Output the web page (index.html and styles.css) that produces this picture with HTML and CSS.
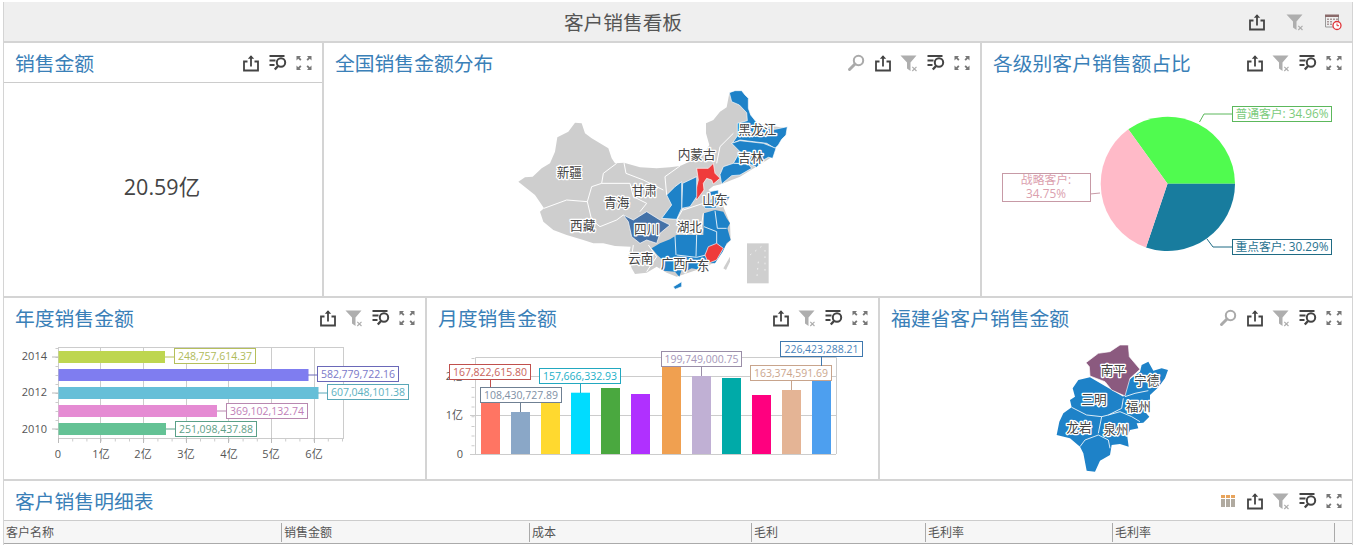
FILE: index.html
```html
<!DOCTYPE html>
<html lang="zh-CN">
<head>
<meta charset="utf-8">
<title>客户销售看板</title>
<link rel="stylesheet" href="styles.css">
</head>
<body>
<svg class="defs" width="0" height="0" aria-hidden="true">
  <symbol id="i-share" viewBox="0 0 18 18">
    <path d="M5.500 7.500H2V16.500H16V7.500H12.500" fill="none" stroke="#444" stroke-width="1.800"/>
    <path d="M9 12.500V2" fill="none" stroke="#444" stroke-width="1.800"/>
    <path d="M5.800 4.800L9 1.300L12.200 4.800Z" fill="#444"/>
  </symbol>
  <symbol id="i-filter" viewBox="0 0 18 18">
    <path d="M0.500 1.500H16.500L10.500 8.500V17L7 14.500V8.500Z" fill="#aeaeae"/>
    <path d="M12.300 12.800L16.500 17M16.500 12.800L12.300 17" stroke="#aeaeae" stroke-width="1.200"/>
  </symbol>
  <symbol id="i-list" viewBox="0 0 18 18">
    <path d="M0.500 2H15.500M0.500 6.500H6.500M0.500 11H5.500" stroke="#444" stroke-width="1.800" fill="none"/>
    <circle cx="12" cy="8.500" r="4.200" fill="none" stroke="#444" stroke-width="2"/>
    <path d="M9 12L5.800 15.500" stroke="#444" stroke-width="2.400"/>
  </symbol>
  <symbol id="i-full" viewBox="0 0 18 18">
    <path d="M1.500 2H6L4.600 3.400L6.500 5.500L5.200 6.800L3.200 4.800L1.500 6.500Z" fill="#777"/>
    <path d="M16.500 2H12L13.400 3.400L11.500 5.500L12.800 6.800L14.800 4.800L16.500 6.500Z" fill="#777"/>
    <path d="M1.500 16H6L4.600 14.600L6.500 12.500L5.200 11.200L3.200 13.200L1.500 11.500Z" fill="#777"/>
    <path d="M16.500 16H12L13.400 14.600L11.500 12.500L12.800 11.200L14.800 13.200L16.500 11.500Z" fill="#777"/>
  </symbol>
  <symbol id="i-zoom" viewBox="0 0 18 18">
    <circle cx="11.500" cy="6.500" r="4.700" fill="none" stroke="#aaa" stroke-width="2"/>
    <path d="M8 10L2.500 15.500" stroke="#aaa" stroke-width="3" stroke-linecap="round"/>
  </symbol>
  <symbol id="i-cal" viewBox="0 0 18 18">
    <path d="M1 1.500H15V4H1Z" fill="#8a6a6a"/>
    <path d="M1.500 4V14H9M14.500 4V8" fill="none" stroke="#999" stroke-width="1"/>
    <path d="M3 5.500H5V7H3ZM6 5.500H8V7H6ZM9 5.500H11V7H9ZM12 5.500H14V7H12ZM3 8H5V9.500H3ZM6 8H8V9.500H6ZM3 10.500H5V12H3ZM6 10.500H8V12H6Z" fill="#a99"/>
    <circle cx="13" cy="12.500" r="4" fill="#fff" stroke="#e0353a" stroke-width="1.300"/>
    <path d="M13 10.500V12.700H15" fill="none" stroke="#e0353a" stroke-width="1"/>
  </symbol>
  <symbol id="i-cols" viewBox="0 0 18 18">
    <path d="M2 3H6V6H2ZM7 3H11V6H7ZM12 3H16V6H12Z" fill="#e8a45c"/>
    <path d="M2 7H6V15H2ZM7 7H11V15H7ZM12 7H16V15H12Z" fill="#b0aaa0"/>
  </symbol>
</svg>

<div class="board">
  <header class="topbar">
    <h1 class="board-title">客户销售看板</h1>
    <div class="tools tools-wide">
      <svg class="icon"><use href="#i-share"/></svg>
      <svg class="icon"><use href="#i-filter"/></svg>
      <svg class="icon"><use href="#i-cal"/></svg>
    </div>
  </header>

  <div class="row row-one">
    <section class="panel p-kpi">
      <div class="panel-head">
        <h2 class="panel-title">销售金额</h2>
        <div class="tools">
          <svg class="icon"><use href="#i-share"/></svg>
          <svg class="icon"><use href="#i-list"/></svg>
          <svg class="icon"><use href="#i-full"/></svg>
        </div>
      </div>
      <div class="kpi-body"><span class="kpi-value">20.59亿</span></div>
    </section>

    <section class="panel p-china">
      <div class="panel-head">
        <h2 class="panel-title">全国销售金额分布</h2>
        <div class="tools">
          <svg class="icon"><use href="#i-zoom"/></svg>
          <svg class="icon"><use href="#i-share"/></svg>
          <svg class="icon"><use href="#i-filter"/></svg>
          <svg class="icon"><use href="#i-list"/></svg>
          <svg class="icon"><use href="#i-full"/></svg>
        </div>
      </div>
      <svg class="chart" width="656" height="214" viewBox="324 82 656 214">
        <g transform="translate(500 80) scale(0.33333)">
          <path class="land" d="M55 305L75 292L98 290L125 265L150 250L165 215L172 172L205 155L225 128L245 130L255 160L275 175L300 190L325 205L335 235L345 250L372 248L420 262L470 265L510 262L540 258L585 238L610 225L628 195L618 160L618 130L640 120L660 95L680 82L688 40L715 50L720 75L745 100L745 125L770 130L860 145L810 235L720 290L665 312L640 318L625 330L650 345L690 350L670 380L690 430L692 480L660 515L640 550L590 570L530 590L500 578L470 560L440 578L405 582L395 565L385 530L392 500L345 498L310 490L280 490L250 480L200 465L160 450L130 425L120 395L132 385L105 345Z"/>
          <path class="border" d="M132 385L200 360L262 365L275 320L305 310L310 280L350 250M262 365L275 420L300 440L350 420L370 405M372 248L378 280L430 300L490 330M305 310L390 310L400 350L440 370L420 395M540 258L495 290L500 345M700 160L660 200L650 250M400 495L395 530M445 495L470 530L440 575M550 390L610 370M550 385L530 420L560 465M610 400L600 465"/>
          <path class="blue" d="M688 38L705 32L725 32L735 45L745 55L745 85L752 105L768 125L795 145L825 148L862 140L858 165L845 178L835 195L825 205L800 190L760 185L720 180L697 190L712 168L712 130L742 122L740 98L718 75L695 65Z"/>
          <path class="blue" d="M695 190L720 182L790 190L828 205L818 235L805 232L790 240L770 262L745 250L700 250L720 215Z"/>
          <path class="blue" d="M660 284L670 260L700 250L745 252L755 265L720 285L695 287L665 312Z"/>
          <path class="red" d="M590 265L625 265L640 250L645 280L660 295L640 312L635 300L620 295L610 310L612 330L590 360L585 340L595 300Z"/>
          <path class="blue" d="M548 310L590 290L590 350L570 380L545 385Z"/>
          <path class="blue" d="M525 320L545 305L545 385L530 418L485 415L515 375L500 345Z"/>
          <path class="blue" d="M628 335L655 330L655 345L632 348Z"/>
          <path class="blue" d="M610 372L640 352L690 350L680 365L645 385L615 385Z"/>
          <path class="blue no-stroke" d="M455 505L480 490L510 478L530 465L610 465L612 400L645 390L670 395L680 415L690 430L682 445L692 480L680 490L668 515L645 550L620 548L605 560L590 568L575 565L560 572L545 570L538 590L525 575L490 572L488 540L472 525Z"/>
          <path class="thin" d="M525 468L528 525M590 465L588 530M530 525L590 532L618 525M645 392L652 445L680 445M612 440L650 455L650 490"/>
          <path class="steel" d="M370 405L400 420L440 395L480 420L510 435L480 460L470 490L440 480L420 490L395 470L385 425Z"/>
          <path class="red" d="M625 500L650 490L670 505L650 540L625 550L615 525Z"/>
          <path class="blue" d="M520 620L545 605L545 620L525 628Z"/>
          <path class="land" d="M670 565L690 530L690 545L678 570Z"/>
          <path class="inset" d="M741 490H806V610H741Z"/>
          <path class="inset-line" d="M750 525L770 510L790 495M795 510V580M775 545L770 600"/>
          <text class="map-label" x="772" y="163">黑龙江</text>
          <text class="map-label" x="752" y="245">吉林</text>
          <text class="map-label" x="590" y="236">内蒙古</text>
          <text class="map-label" x="208" y="290">新疆</text>
          <text class="map-label" x="433" y="345">甘肃</text>
          <text class="map-label" x="350" y="380">青海</text>
          <text class="map-label" x="645" y="371">山东</text>
          <text class="map-label" x="248" y="450">西藏</text>
          <text class="map-label" x="440" y="461">四川</text>
          <text class="map-label" x="568" y="453">湖北</text>
          <text class="map-label" x="422" y="550">云南</text>
          <text class="map-label" x="520" y="563">广西</text>
          <text class="map-label" x="590" y="570">广东</text>
        </g>
      </svg>
    </section>

    <section class="panel p-pie">
      <div class="panel-head">
        <h2 class="panel-title">各级别客户销售额占比</h2>
        <div class="tools">
          <svg class="icon"><use href="#i-share"/></svg>
          <svg class="icon"><use href="#i-filter"/></svg>
          <svg class="icon"><use href="#i-list"/></svg>
          <svg class="icon"><use href="#i-full"/></svg>
        </div>
      </div>
      <svg class="chart" width="370" height="214" viewBox="982 82 370 214">
        <path d="M1167.500 183.700L1128.300 129.300A67.500 67.500 0 0 1 1235 183.700Z" fill="#50fb4f"/>
        <path d="M1167.500 183.700L1235 183.700A67.500 67.500 0 0 1 1146 247.500Z" fill="#187c9e"/>
        <path d="M1167.500 183.700L1146 247.500A67.500 67.500 0 0 1 1128.300 129.300Z" fill="#ffbac8"/>
        <path class="lead" stroke="#5cb85c" d="M1199.500 122L1204 114H1232"/>
        <path class="lead" stroke="#c79aa6" d="M1090 194L1100 193"/>
        <path class="lead" stroke="#1f6b84" d="M1207 239L1213 247H1232"/>
        <rect class="lbl-box" x="1232.500" y="106.500" width="99" height="15" stroke="#5cb85c"/>
        <text class="lbl-text" x="1282" y="118" fill="#7ccb7c">普通客户: 34.96%</text>
        <rect class="lbl-box" x="1002.500" y="173.500" width="88" height="28" stroke="#c79aa6"/>
        <text class="lbl-text" x="1046" y="184" fill="#dba0ae">战略客户:</text>
        <text class="lbl-text" x="1046" y="198" fill="#dba0ae">34.75%</text>
        <rect class="lbl-box" x="1232.500" y="239.500" width="99" height="15" stroke="#1f6b84"/>
        <text class="lbl-text" x="1282" y="251" fill="#2a7391">重点客户: 30.29%</text>
      </svg>
    </section>
  </div>

  <div class="row row-two">
    <section class="panel p-year">
      <div class="panel-head">
        <h2 class="panel-title">年度销售金额</h2>
        <div class="tools">
          <svg class="icon"><use href="#i-share"/></svg>
          <svg class="icon"><use href="#i-filter"/></svg>
          <svg class="icon"><use href="#i-list"/></svg>
          <svg class="icon"><use href="#i-full"/></svg>
        </div>
      </div>
      <svg class="chart" width="421" height="141" viewBox="4 337 421 141">
        <rect class="plot" x="58.500" y="347.500" width="285" height="91"/>
        <path class="grid" d="M100.500 348V438M143.500 348V438M186.500 348V438M228.500 348V438M271.500 348V438M314.500 348V438"/>
        <path class="minor" d="M58 440H344" stroke-dasharray="1 13.200"/>
        <path class="minor" d="M57 348V438" stroke-dasharray="1 8"/>
        <path class="axis" d="M58.500 438V443M100.500 438V443M143.500 438V443M186.500 438V443M228.500 438V443M271.500 438V443M314.500 438V443M52 357H58M52 393H58M52 429H58"/>
        <rect x="58.500" y="351" width="106.500" height="12" fill="#bed650"/>
        <rect x="58.500" y="369" width="250" height="12" fill="#7f7df0"/>
        <rect x="58.500" y="387" width="260" height="12" fill="#66bfd8"/>
        <rect x="58.500" y="405" width="158.500" height="12" fill="#e58bd3"/>
        <rect x="58.500" y="423" width="107.500" height="12" fill="#64c295"/>

        <path class="lead" stroke="#b5bf5b" d="M165 357H174"/>
        <rect class="lbl-box" x="174.500" y="348.500" width="81" height="15" stroke="#b5bf5b"/>
        <text class="lbl-num" x="215" y="360" fill="#b0bb5a">248,757,614.37</text>
        <path class="lead" stroke="#6a68b8" d="M308 375H317"/>
        <rect class="lbl-box" x="317.500" y="366.500" width="81" height="15" stroke="#6a68b8"/>
        <text class="lbl-num" x="358" y="378" fill="#7a78c8">582,779,722.16</text>
        <path class="lead" stroke="#5aa8b8" d="M318 393H327"/>
        <rect class="lbl-box" x="327.500" y="384.500" width="81" height="15" stroke="#5aa8b8"/>
        <text class="lbl-num" x="368" y="396" fill="#5cb0c0">607,048,101.38</text>
        <path class="lead" stroke="#b888b0" d="M217 411H226"/>
        <rect class="lbl-box" x="226.500" y="403.500" width="81" height="15" stroke="#b888b0"/>
        <text class="lbl-num" x="267" y="415" fill="#c080b8">369,102,132.74</text>
        <path class="lead" stroke="#5aa088" d="M166 429H175"/>
        <rect class="lbl-box" x="175.500" y="421.500" width="81" height="15" stroke="#5aa088"/>
        <text class="lbl-num" x="216" y="433" fill="#5fa088">251,098,437.88</text>

        <text class="tick tick-end" x="47" y="360">2014</text>
        <text class="tick tick-end" x="47" y="396">2012</text>
        <text class="tick tick-end" x="47" y="433">2010</text>
        <text class="tick" x="58" y="458">0</text>
        <text class="tick" x="101" y="458">1亿</text>
        <text class="tick" x="143" y="458">2亿</text>
        <text class="tick" x="186" y="458">3亿</text>
        <text class="tick" x="229" y="458">4亿</text>
        <text class="tick" x="271" y="458">5亿</text>
        <text class="tick" x="314" y="458">6亿</text>
      </svg>
    </section>

    <section class="panel p-month">
      <div class="panel-head">
        <h2 class="panel-title">月度销售金额</h2>
        <div class="tools">
          <svg class="icon"><use href="#i-share"/></svg>
          <svg class="icon"><use href="#i-filter"/></svg>
          <svg class="icon"><use href="#i-list"/></svg>
          <svg class="icon"><use href="#i-full"/></svg>
        </div>
      </div>
      <svg class="chart" width="451" height="141" viewBox="427 337 451 141">
        <path class="grid" d="M475.500 357.500H836.500V454M470 376.500H836M470 415.500H836M470 454.500H836M475.500 357.500V454"/>
        <path class="minor" d="M473 358V454" stroke-dasharray="1 8.700"/>
        <text class="tick tick-end" x="463" y="380">2亿</text>
        <text class="tick tick-end" x="463" y="419">1亿</text>
        <text class="tick tick-end" x="463" y="458">0</text>
        <rect x="481" y="400" width="19" height="54" fill="#ff7563"/>
        <rect x="511" y="412" width="19" height="42" fill="#8aa7c7"/>
        <rect x="541" y="400" width="19" height="54" fill="#ffd92f"/>
        <rect x="571" y="392.700" width="19" height="61.300" fill="#00dcff"/>
        <rect x="601" y="388" width="19" height="66" fill="#4aa83f"/>
        <rect x="631" y="394" width="19" height="60" fill="#b030ff"/>
        <rect x="662" y="366.700" width="19" height="87.300" fill="#f0a050"/>
        <rect x="692" y="376" width="19" height="78" fill="#c0b0d4"/>
        <rect x="722" y="378" width="19" height="76" fill="#00aaa8"/>
        <rect x="752" y="395" width="19" height="59" fill="#ff007f"/>
        <rect x="782" y="390" width="19" height="64" fill="#e4b495"/>
        <rect x="812" y="380" width="19" height="74" fill="#4d9fef"/>

        <path class="lead" stroke="#c0504d" d="M490.500 380V400"/>
        <rect class="lbl-box" x="449.500" y="364.500" width="81" height="15" stroke="#c0504d"/>
        <text class="lbl-num" x="490" y="376" fill="#c8625a">167,822,615.80</text>
        <path class="lead" stroke="#6f8093" d="M520.500 403V412"/>
        <rect class="lbl-box" x="480.500" y="387.500" width="81" height="15" stroke="#6f8093"/>
        <text class="lbl-num" x="521" y="399" fill="#8090a5">108,430,727.89</text>
        <path class="lead" stroke="#22a8c0" d="M580.500 384V393"/>
        <rect class="lbl-box" x="539.500" y="368.500" width="81" height="15" stroke="#22a8c0"/>
        <text class="lbl-num" x="580" y="380" fill="#22b0c8">157,666,332.93</text>
        <path class="lead" stroke="#9a8ea8" d="M701.500 367V376"/>
        <rect class="lbl-box" x="661.500" y="351.500" width="80" height="15" stroke="#9a8ea8"/>
        <text class="lbl-num" x="701.500" y="363" fill="#a596b8">199,749,000.75</text>
        <path class="lead" stroke="#c8a48c" d="M791.500 381V390"/>
        <rect class="lbl-box" x="750.500" y="365.500" width="81" height="15" stroke="#c8a48c"/>
        <text class="lbl-num" x="791" y="377" fill="#cba68e">163,374,591.69</text>
        <path class="lead" stroke="#3f78ae" d="M821.500 357V366"/>
        <rect class="lbl-box" x="780.500" y="341.500" width="82" height="15" stroke="#3f78ae"/>
        <text class="lbl-num" x="821.500" y="353" fill="#4a84ba">226,423,288.21</text>
      </svg>
    </section>

    <section class="panel p-fujian">
      <div class="panel-head">
        <h2 class="panel-title">福建省客户销售金额</h2>
        <div class="tools">
          <svg class="icon"><use href="#i-zoom"/></svg>
          <svg class="icon"><use href="#i-share"/></svg>
          <svg class="icon"><use href="#i-filter"/></svg>
          <svg class="icon"><use href="#i-list"/></svg>
          <svg class="icon"><use href="#i-full"/></svg>
        </div>
      </div>
      <svg class="chart" width="472" height="141" viewBox="880 337 472 141">
        <g transform="translate(1030 300) scale(0.33333)">
          <path class="blue no-stroke" d="M120 300L135 290L128 265L145 240L180 232L280 290L290 245L330 215L335 195L355 185L370 212L395 205L414 210L405 235L385 262L360 285L360 300L345 335L358 350L340 368L320 370L325 385L300 390L292 410L296 440L270 432L245 435L240 465L210 482L195 515L170 512L160 460L150 440L120 415L80 405L88 365L100 340L125 322Z"/>
          <path class="thin" d="M125 322L170 345L215 350L235 345M280 295L275 325L235 345M215 350L205 400M150 440L165 420L205 405L235 420L240 445M235 345L270 335L305 350L330 365M285 290L315 280L355 272"/>
          <path class="plum" d="M168 188L205 160L240 155L270 135L295 135L298 170L330 208L300 235L285 288L245 270L225 245L180 228L178 200Z"/>
          <text class="map-label" x="250" y="225">南平</text>
          <text class="map-label" x="350" y="256">宁德</text>
          <text class="map-label" x="192" y="313">三明</text>
          <text class="map-label" x="325" y="333">福州</text>
          <text class="map-label" x="147" y="395">龙岩</text>
          <text class="map-label" x="258" y="403">泉州</text>
        </g>
      </svg>
    </section>
  </div>

  <section class="panel p-table">
    <div class="panel-head">
      <h2 class="panel-title">客户销售明细表</h2>
      <div class="tools">
        <svg class="icon"><use href="#i-cols"/></svg>
        <svg class="icon"><use href="#i-share"/></svg>
        <svg class="icon"><use href="#i-filter"/></svg>
        <svg class="icon"><use href="#i-list"/></svg>
        <svg class="icon"><use href="#i-full"/></svg>
      </div>
    </div>
    <div class="table-head">
      <div class="th">客户名称</div>
      <div class="th">销售金额</div>
      <div class="th">成本</div>
      <div class="th">毛利</div>
      <div class="th">毛利率</div>
      <div class="th">毛利率</div>
    </div>
  </section>
</div>
</body>
</html>
```

FILE: styles.css
```css
* { box-sizing: border-box; }
html, body { margin: 0; height: 545px; overflow: hidden; background: #fff; }
body { font-family: "Open Sans", "Noto Sans CJK SC", sans-serif; color: #444; }
.defs { position: absolute; }

.board {
  height: 543px;
  margin: 2px 3px 0;
  padding: 0 1px;
  background: #d4d4d4;
  display: flex;
  flex-direction: column;
  gap: 2px;
  overflow: hidden;
}

.topbar {
  height: 39px;
  flex: none;
  background: #efefef;
  display: flex;
  align-items: center;
}
.board-title {
  flex: 1;
  margin: 0 0 0 -6px;
  font-size: 19.7px;
  font-weight: 400;
  text-align: center;
  color: #555;
}
.tools { display: flex; gap: 8.5px; padding-right: 9px; }
.tools-wide { gap: 20px; padding-right: 10px; }
.icon { width: 18px; height: 18px; display: block; }

.row { display: flex; gap: 2px; flex: none; }
.row-one { height: 253px; }
.row-two { height: 181px; }

.panel { background: #fff; display: flex; flex-direction: column; overflow: hidden; }
.panel-head {
  height: 39px;
  flex: none;
  padding-left: 11px;
  display: flex;
  align-items: center;
  justify-content: space-between;
}
.panel-title { margin: 0; font-size: 19.8px; font-weight: 400; color: #3a80b8; }

.p-kpi { width: 318px; }
.p-china { width: 656px; }
.p-pie { width: 370px; }
.p-year { width: 421px; }
.p-month { width: 451px; }
.p-fujian { width: 472px; }
.p-table { flex: 1; }

.kpi-body {
  flex: 1;
  border-top: 1px solid #ccc;
  display: flex;
  align-items: center;
  justify-content: center;
  padding: 0 2px 8px 0;
}
.kpi-value { font-size: 21.5px; color: #444; }

.chart { display: block; flex: none; }
.land { fill: #cecece; }
.blue { fill: #1e82c8; stroke: #fff; stroke-width: 2; }
.no-stroke { stroke: none; }
.thin { fill: none; stroke: #fff; stroke-width: 2.500; }
.red { fill: #ef3b3b; stroke: #fff; stroke-width: 2; }
.steel { fill: #4472a8; stroke: #fff; stroke-width: 2; }
.plum { fill: #8b5a7f; stroke: #fff; stroke-width: 2; }
.border { fill: none; stroke: #fff; stroke-width: 3; }
.inset { fill: #cfcfcf; }
.inset-line { fill: none; stroke: #fff; stroke-width: 2; stroke-dasharray: 5 14; }
.map-label {
  font-size: 38px;
  text-anchor: middle;
  fill: #444;
  stroke: #fff;
  stroke-width: 8px;
  stroke-linejoin: round;
  paint-order: stroke;
}

.lead { fill: none; stroke-width: 1; }
.lbl-box { fill: #fff; stroke-width: 1; }
.lbl-text { font-size: 11.8px; text-anchor: middle; }
.lbl-num { font-size: 10.5px; text-anchor: middle; }
.plot { fill: none; stroke: #ccc; }
.grid { fill: none; stroke: #ccc; stroke-width: 1; }
.minor { fill: none; stroke: #ccc; stroke-width: 3; }
.axis { fill: none; stroke: #bbb; stroke-width: 1; }
.tick { font-size: 11px; fill: #555; text-anchor: middle; }
.tick-end { text-anchor: end; }

.table-head {
  height: 24px;
  flex: none;
  display: grid;
  grid-template-columns: 278px 248px 222px 174px 187px 222px;
  align-items: center;
  background: #f6f6f6;
  border-top: 1px solid #ccc;
  border-bottom: 1px solid #aaa;
}
.th {
  height: 19px;
  font-size: 12px;
  line-height: 19px;
  color: #555;
  padding-left: 2px;
  border-right: 1px solid #aaa;
  white-space: nowrap;
}
```
